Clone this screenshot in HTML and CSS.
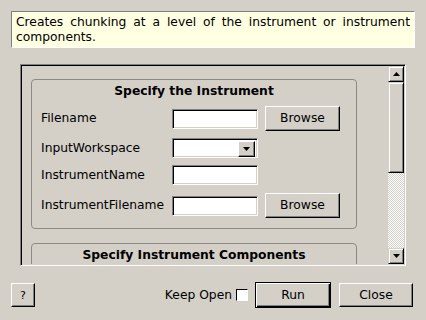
FILE: index.html
```html
<!DOCTYPE html>
<html lang="en">
<head>
    <meta charset="UTF-8">
    <title>Algorithm Dialog</title>
    <link rel="stylesheet" href="styles.css">
</head>
<body>
    <div class="dialog">
        <div class="desc">Creates chunking at a level of the instrument or instrument components.</div>

        <div class="scroll-frame">
            <div class="viewport">
                <div class="group">
                    <div class="group-title">Specify the Instrument</div>
                    <div class="row">
                        <span class="lbl">Filename</span>
                        <span class="field"></span>
                        <button class="btn browse">Browse</button>
                    </div>
                    <div class="row">
                        <span class="lbl">InputWorkspace</span>
                        <span class="field combo">
                            <span class="combo-arrow">
                                <svg width="7" height="4" viewBox="0 0 7 4"><path d="M0 0H7L3.5 4Z" fill="#000"/></svg>
                            </span>
                        </span>
                    </div>
                    <div class="row">
                        <span class="lbl">InstrumentName</span>
                        <span class="field"></span>
                    </div>
                    <div class="row last">
                        <span class="lbl">InstrumentFilename</span>
                        <span class="field"></span>
                        <button class="btn browse">Browse</button>
                    </div>
                </div>
                <div class="group second">
                    <div class="group-title">Specify Instrument Components</div>
                </div>
            </div>
            <div class="scrollbar">
                <div class="sb-btn">
                    <svg width="7" height="4" viewBox="0 0 7 4"><path d="M0 4H7L3.5 0Z" fill="#000"/></svg>
                </div>
                <div class="sb-thumb"></div>
                <div class="sb-track"></div>
                <div class="sb-btn">
                    <svg width="7" height="4" viewBox="0 0 7 4"><path d="M0 0H7L3.5 4Z" fill="#000"/></svg>
                </div>
            </div>
        </div>

        <div class="footer">
            <button class="btn help">?</button>
            <span class="spacer"></span>
            <span class="keep">Keep Open</span>
            <span class="check"></span>
            <button class="btn run">Run</button>
            <button class="btn close">Close</button>
        </div>
    </div>
</body>
</html>
```

FILE: styles.css
```css
body, html {
    margin: 0;
    padding: 0;
    height: 100%;
    background-color: #d4d0c8;
    font-family: "DejaVu Sans", sans-serif;
    font-size: 12.3px;
    line-height: 15px;
    color: #000;
}
.dialog {
    display: flex;
    flex-direction: column;
}

/* description box at the top */
.desc {
    margin: 11px 11px 0 11px;
    height: 37px;
    box-sizing: border-box;
    padding: 3px 4px;
    background-color: #ffffe1;
    border: 1px solid;
    border-color: #808080 #fff #fff #808080;
    text-align: justify;
}

/* scroll area with the property groups */
.scroll-frame {
    margin: 16px 20px 0 20px;
    height: 202px;
    box-sizing: border-box;
    display: flex;
    border: 1px solid;
    border-color: #808080 #fff #fff #808080;
    box-shadow: inset 1px 1px 0 #000, inset -1px -1px 0 #d4d0c8;
    padding: 1px;
}
.viewport {
    flex: 1;
    overflow: hidden;
    padding: 13px 0 0 9px;
}
.group {
    width: 326px;
    box-sizing: border-box;
    border: 1px solid #8c8a85;
    border-radius: 4px;
    padding: 4px 9px 10px 9px;
    display: flex;
    flex-direction: column;
    gap: 7px;
}
.group.second {
    margin-top: 14px;
    height: 40px;
}
.group-title {
    text-align: center;
    font-weight: bold;
}
.row {
    display: flex;
    align-items: center;
    min-height: 20px;
}
.row.last {
    margin-top: 1px;
}
.lbl {
    width: 131px;
}
.field {
    width: 86px;
    height: 20px;
    box-sizing: border-box;
    background-color: #fff;
    border: 1px solid;
    border-color: #808080 #fff #fff #808080;
    box-shadow: inset 1px 1px 0 #000, inset -1px -1px 0 #d4d0c8;
    display: flex;
    justify-content: flex-end;
    padding: 2px;
}
.combo-arrow {
    width: 17px;
    height: 16px;
    box-sizing: border-box;
    background-color: #d4d0c8;
    border: 1px solid;
    border-color: #fff #000 #000 #fff;
    box-shadow: inset -1px -1px 0 #808080;
    display: flex;
    align-items: center;
    justify-content: center;
}

/* buttons */
.btn {
    font: inherit;
    color: #000;
    padding: 0;
    margin: 0;
    background-color: #d4d0c8;
    border: 1px solid;
    border-color: #fff #000 #000 #fff;
    box-shadow: inset -1px -1px 0 #808080, inset 1px 1px 0 #d4d0c8;
    box-sizing: border-box;
}
.browse {
    width: 75px;
    height: 25px;
    margin-left: 7px;
}

/* scrollbar */
.scrollbar {
    width: 16px;
    display: flex;
    flex-direction: column;
}
.sb-btn, .sb-thumb {
    box-sizing: border-box;
    background-color: #d4d0c8;
    border: 1px solid;
    border-color: #d4d0c8 #000 #000 #d4d0c8;
    box-shadow: inset 1px 1px 0 #fff, inset -1px -1px 0 #808080;
}
.sb-btn {
    height: 16px;
    display: flex;
    align-items: center;
    justify-content: center;
}
.sb-thumb {
    height: 91px;
}
.sb-track {
    flex: 1;
    background: repeating-conic-gradient(#d4d0c8 0 25%, #fff 0 50%) 0 0 / 2px 2px;
}

/* bottom bar */
.footer {
    display: flex;
    align-items: center;
    margin-top: 16px;
    padding: 0 13px 0 11px;
    height: 26px;
}
.help {
    width: 24px;
    height: 24px;
    font-size: 11px;
}
.spacer {
    flex: 1;
}
.keep {
    margin-right: 4px;
}
.check {
    width: 12px;
    height: 12px;
    box-sizing: border-box;
    background-color: #fff;
    border: 1px solid;
    border-color: #000 #fff #fff #000;
    margin-right: 7px;
}
.run {
    width: 76px;
    height: 26px;
    border: 1px solid #000;
    box-shadow: inset 1px 1px 0 #fff, inset -1px -1px 0 #000, inset -2px -2px 0 #808080;
}
.close {
    width: 74px;
    height: 24px;
    margin-left: 8px;
}
```
